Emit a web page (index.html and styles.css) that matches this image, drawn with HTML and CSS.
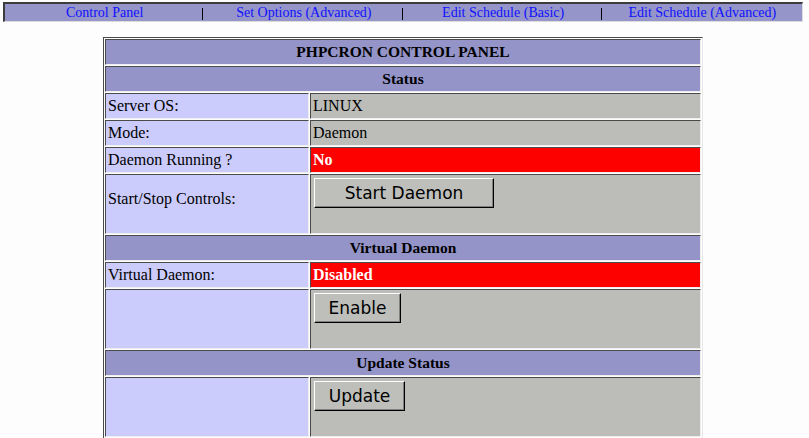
FILE: index.html
```html
<!DOCTYPE html>
<html>
<head>
<meta charset="utf-8">
<title>PHPCRON Control Panel</title>
<link rel="stylesheet" href="styles.css">
</head>
<body>
<nav class="topnav">
  <div class="navcell"><a href="#">Control Panel</a></div>
  <div class="navcell sep"><a href="#">Set Options (Advanced)</a></div>
  <div class="navcell sep"><a href="#">Edit Schedule (Basic)</a></div>
  <div class="navcell sep"><a href="#">Edit Schedule (Advanced)</a></div>
</nav>

<table class="panel">
  <tr class="row"><th colspan="2" class="title">PHPCRON CONTROL PANEL</th></tr>
  <tr class="row"><th colspan="2" class="section">Status</th></tr>
  <tr class="row"><td class="label">Server OS:</td><td class="value">LINUX</td></tr>
  <tr class="row"><td class="label">Mode:</td><td class="value">Daemon</td></tr>
  <tr class="row"><td class="label">Daemon Running ?</td><td class="value alert">No</td></tr>
  <tr class="tall"><td class="label">Start/Stop Controls:</td><td class="value ctl"><button class="btn btn-start">Start Daemon</button></td></tr>
  <tr class="row"><th colspan="2" class="section">Virtual Daemon</th></tr>
  <tr class="row"><td class="label">Virtual Daemon:</td><td class="value alert">Disabled</td></tr>
  <tr class="tall"><td class="label"></td><td class="value ctl"><button class="btn btn-enable">Enable</button></td></tr>
  <tr class="row"><th colspan="2" class="section">Update Status</th></tr>
  <tr class="tall"><td class="label"></td><td class="value ctl"><button class="btn btn-update">Update</button></td></tr>
</table>
</body>
</html>
```
FILE: styles.css
```css
html { background: #fcfdfc; }
body {
  margin: 2px 6px 0 3px;
  font-family: "Liberation Serif", "Times New Roman", serif;
  color: #000;
}
.topnav {
  display: grid;
  grid-template-columns: repeat(4, 1fr);
  height: 17px;
  background: #9595c9;
  border-top: 2px solid #3c3c3c;
  border-left: 2px solid #3c3c3c;
  border-right: 1px solid #dcdcdc;
  border-bottom: 1px solid #dcdcdc;
  box-sizing: content-box;
  width: 797px;
}
.navcell {
  position: relative;
  text-align: center;
  font-size: 14px;
  line-height: 18px;
}
.navcell a { color: #1010ff; text-decoration: none; }
.navcell.sep::before {
  content: "";
  position: absolute;
  left: -2px;
  top: 4px;
  width: 1px;
  height: 12px;
  background: #000;
}
.panel {
  width: 600px;
  margin: 15px auto 0 auto;
  border-collapse: separate;
  border-spacing: 1px;
  border-top: 1px solid #4a4a4a;
  border-left: 1px solid #4a4a4a;
  border-right: 1px solid #e8e8e8;
  border-bottom: 1px solid #e8e8e8;
}
.panel th, .panel td {
  border-top: 1px solid #4a4a4a;
  border-left: 1px solid #4a4a4a;
  border-right: 1px solid #eeeeee;
  border-bottom: 1px solid #eeeeee;
  padding: 0 2px;
  line-height: 16px;
}
.row { height: 26px; }
.tall { height: 60px; }
.title, .section {
  background: #9494c8;
  font-weight: bold;
  font-size: 15.5px;
  text-align: center;
}
.label {
  width: 198px;
  background: #ccccfc;
  font-size: 16px;
  vertical-align: middle;
}
.tall .label { padding-bottom: 10px; }
.value {
  background: #bcbdb9;
  font-size: 16px;
}
.alert {
  background: #fd0000;
  color: #fff;
  font-weight: bold;
}
.panel .ctl {
  vertical-align: top;
  padding: 3px 3px;
}
.btn {
  font-family: "DejaVu Sans", Verdana, sans-serif;
  font-size: 17px;
  height: 30px;
  background: #bebfbb;
  color: #000;
  border-top: 1px solid #ffffff;
  border-left: 1px solid #ffffff;
  border-right: 1px solid #000;
  border-bottom: 1px solid #000;
  box-shadow: inset -1px -1px 0 #808080;
  padding: 0;
  margin: 0;
}
.btn-start { width: 180px; }
.btn-enable { width: 87px; }
.btn-update { width: 91px; }
```
